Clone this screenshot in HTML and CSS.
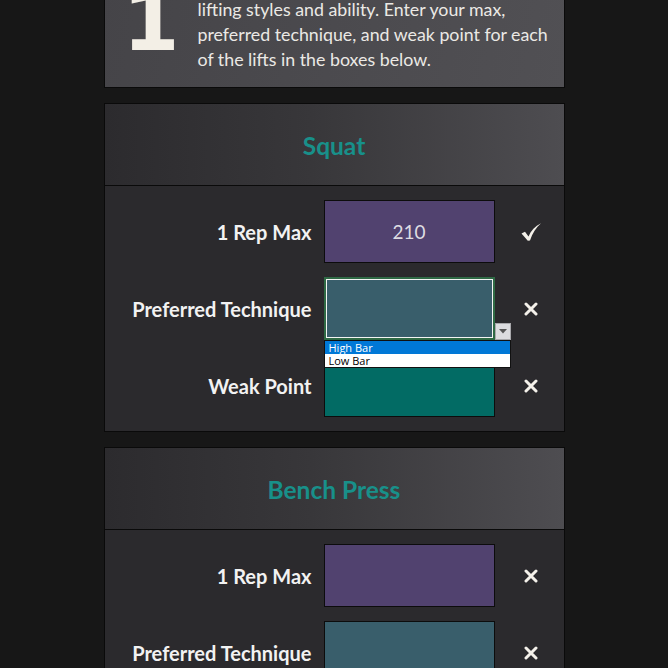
FILE: index.html
```html
<!DOCTYPE html>
<html>
<head>
<meta charset="utf-8">
<link rel="stylesheet" href="styles.css">
</head>
<body>
<div class="page">
  <section class="intro">
    <div class="step">1</div>
    <p class="intro-text">Fill in the information below about your<br>lifting styles and ability. Enter your max,<br>preferred technique, and weak point for each<br>of the lifts in the boxes below.</p>
  </section>

  <section class="lift">
    <header class="lift-head">Squat</header>
    <div class="lift-body">
      <div class="label">1 Rep Max</div>
      <div class="field max">210</div>
      <div class="status"><svg width="22" height="20" viewBox="0 0 22 20"><path d="M1.5 11.5 L5 9.8 L8.5 14.5 C11 8.5 15 4 21 1.2 C16 5.5 12.5 11 10 18.5 L7.8 18.8 Z" fill="#f4f1ea"/></svg></div>

      <div class="label">Preferred Technique</div>
      <div class="field tech active">
        <div class="drop-btn"><svg width="8" height="5" viewBox="0 0 8 5"><path d="M0 0 H8 L4 4.5 Z" fill="#555"/></svg></div>
        <ul class="drop-list">
          <li class="sel">High Bar</li>
          <li>Low Bar</li>
        </ul>
      </div>
      <div class="status"><svg width="14" height="14" viewBox="0 0 14 14"><path d="M2 2 L12 12 M12 2 L2 12" stroke="#f4f1ea" stroke-width="3" stroke-linecap="round"/></svg></div>

      <div class="label">Weak Point</div>
      <div class="field weak"></div>
      <div class="status"><svg width="14" height="14" viewBox="0 0 14 14"><path d="M2 2 L12 12 M12 2 L2 12" stroke="#f4f1ea" stroke-width="3" stroke-linecap="round"/></svg></div>
    </div>
  </section>

  <section class="lift">
    <header class="lift-head">Bench Press</header>
    <div class="lift-body">
      <div class="label">1 Rep Max</div>
      <div class="field max"></div>
      <div class="status"><svg width="14" height="14" viewBox="0 0 14 14"><path d="M2 2 L12 12 M12 2 L2 12" stroke="#f4f1ea" stroke-width="3" stroke-linecap="round"/></svg></div>

      <div class="label">Preferred Technique</div>
      <div class="field tech"></div>
      <div class="status"><svg width="14" height="14" viewBox="0 0 14 14"><path d="M2 2 L12 12 M12 2 L2 12" stroke="#f4f1ea" stroke-width="3" stroke-linecap="round"/></svg></div>

      <div class="label">Weak Point</div>
      <div class="field weak"></div>
      <div class="status"><svg width="14" height="14" viewBox="0 0 14 14"><path d="M2 2 L12 12 M12 2 L2 12" stroke="#f4f1ea" stroke-width="3" stroke-linecap="round"/></svg></div>
    </div>
  </section>
</div>
</body>
</html>
```

FILE: styles.css
```css
html, body {
  margin: 0;
  padding: 0;
  background: #171717;
  overflow: hidden;
}
body {
  font-family: Lato, "Open Sans", "Noto Sans", sans-serif;
  color: #f2f2f2;
}
.page {
  width: 461px;
  margin: -39px auto 0;
  display: flex;
  flex-direction: column;
  gap: 15px;
}
.intro {
  border: 1px solid #0a0a0a;
  background: linear-gradient(100deg, #454448, #515054);
  display: flex;
  align-items: flex-start;
  padding: 10px 10px 15px 18px;
  gap: 21px;
}
.step {
  font-family: "DejaVu Sans", sans-serif;
  font-weight: 700;
  font-size: 82px;
  line-height: 1;
  color: #f3efe6;
  margin-top: 9px;
  width: 54px;
  text-align: center;
  flex: none;
}
.intro-text {
  margin: 0;
  font-size: 17.8px;
  line-height: 25px;
  color: #ebe9e5;
  white-space: nowrap;
}
.lift {
  border: 1px solid #0a0a0a;
  background: #2b2a2d;
}
.lift-head {
  height: 82px;
  border-bottom: 1px solid #0a0a0a;
  background: linear-gradient(90deg, #2c2b2e 0%, #38373a 45%, #4e4d51 100%);
  display: flex;
  align-items: center;
  justify-content: center;
  font-size: 24.5px;
  font-weight: 700;
  color: #18908a;
  padding-top: 2px;
  box-sizing: border-box;
}
.lift-body {
  display: grid;
  grid-template-columns: 1fr 171px 69px;
  grid-auto-rows: 63px;
  row-gap: 14px;
  padding: 14px 0 14px;
  align-items: center;
}
.label {
  text-align: right;
  padding-right: 12px;
  font-size: 20px;
  font-weight: 700;
  color: #f2f2f2;
}
.field {
  height: 63px;
  box-sizing: border-box;
  border: 1px solid #0c0c0c;
  position: relative;
  display: flex;
  align-items: center;
  justify-content: center;
  font-size: 19px;
  color: #dedce2;
}
.max { background: #51426f; }
.tech { background: #395e6b; }
.weak { background: #026b64; }
.field.active {
  border: 2px solid #2f6a45;
  box-shadow: inset 0 0 0 1px #f4f4f4;
}
.status {
  display: flex;
  justify-content: center;
  padding-left: 3px;
}
.status svg { display: block; }
.drop-btn {
  position: absolute;
  right: -18px;
  bottom: -2px;
  width: 16px;
  height: 17px;
  box-sizing: border-box;
  background: #dcdcdf;
  border: 1px solid #a8a8ab;
  display: flex;
  align-items: center;
  justify-content: center;
}
.drop-list {
  position: absolute;
  left: -2px;
  top: 61px;
  width: 187px;
  margin: 0;
  padding: 0;
  list-style: none;
  background: #fff;
  border: 1px solid #111;
  box-sizing: border-box;
  font-family: "Open Sans", "Noto Sans", sans-serif;
  font-size: 11px;
  z-index: 2;
}
.drop-list li {
  height: 13px;
  line-height: 13px;
  padding-left: 4px;
  color: #000;
}
.drop-list li.sel {
  background: #0078d7;
  color: #fff;
}
```
